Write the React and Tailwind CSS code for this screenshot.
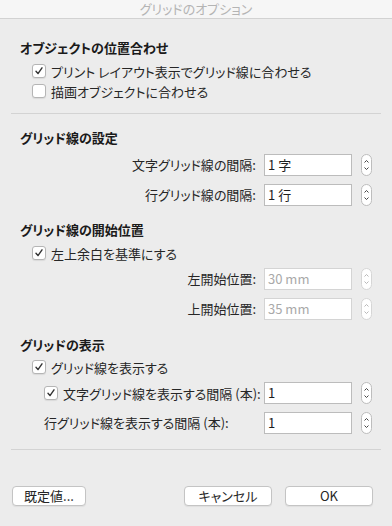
import React from 'react';

const font = { fontFamily: '"Noto Sans CJK JP", "Liberation Sans", sans-serif' };

const Check = ({ checked }) => (
    <span className="flex items-center justify-center w-[14px] h-[14px] shrink-0 rounded-[3px] bg-white border border-[#b5b5b5] shadow-[0_1px_1px_rgba(0,0,0,0.08)]">
        {checked && (
            <svg width="10" height="10" viewBox="0 0 10 10">
                <path d="M2 5.2 L4 7.6 L8 1.8" fill="none" stroke="#333" strokeWidth="1.4" strokeLinecap="round" strokeLinejoin="round" />
            </svg>
        )}
    </span>
);

const CheckRow = ({ checked, label, className = '' }) => (
    <div className={`flex items-center h-[20px] gap-[5px] ${className}`}>
        <Check checked={checked} />
        <span className="text-[13px] text-[#262626] leading-none whitespace-nowrap">{label}</span>
    </div>
);

const Stepper = ({ disabled }) => (
    <div className={`flex flex-col items-center justify-center w-[11px] h-[22px] rounded-full bg-white border ${disabled ? 'border-[#d6d6d6]' : 'border-[#bdbdbd]'}`}>
        <svg width="7" height="16" viewBox="0 0 7 16">
            <path d="M1.5 5.5 L3.5 3.5 L5.5 5.5" fill="none" stroke={disabled ? '#b8b8b8' : '#444'} strokeWidth="1" />
            <path d="M1.5 10.5 L3.5 12.5 L5.5 10.5" fill="none" stroke={disabled ? '#b8b8b8' : '#444'} strokeWidth="1" />
        </svg>
    </div>
);

const Field = ({ value, disabled }) => (
    <div className="flex items-center gap-[9px]">
        <div className={`flex items-center w-[88px] h-[22px] bg-white border pl-[3px] text-[13px] ${disabled ? 'border-[#d4d4d4] text-[#a9a9a9]' : 'border-[#bcbcbc] text-[#1e1e1e]'}`}>
            {value}
        </div>
        <Stepper disabled={disabled} />
    </div>
);

const FieldRow = ({ label, value, disabled, className = '' }) => (
    <div className={`flex items-center justify-end gap-[8px] pr-[20px] ${className}`}>
        <span className="text-[13px] text-[#262626] whitespace-nowrap">{label}</span>
        <Field value={value} disabled={disabled} />
    </div>
);

const Heading = ({ children, className = '' }) => (
    <div className={`pl-[20px] h-[18px] flex items-center text-[13px] font-bold text-[#1a1a1a] ${className}`}>{children}</div>
);

const Button = ({ children, className = '' }) => (
    <button className={`h-[20px] bg-white border border-[#c4c4c4] rounded-[4px] text-[13px] text-[#262626] flex items-center justify-center shadow-[0_1px_1px_rgba(0,0,0,0.06)] ${className}`}>
        {children}
    </button>
);

export default function App() {
    return (
        <div className="w-[392px] h-[526px] bg-[#ececec] flex flex-col overflow-hidden [font-feature-settings:'palt']" style={font}>
            {/* title bar */}
            <div className="h-[19px] shrink-0 bg-[#f6f6f6] border-b border-[#d2d2d2] flex items-center justify-center text-[13px] text-[#b4b4b4]">
                グリッドのオプション
            </div>

            <Heading className="mt-[20px]">オブジェクトの位置合わせ</Heading>
            <div className="pl-[32px] mt-[4px] flex flex-col">
                <CheckRow checked label="プリント レイアウト表示でグリッド線に合わせる" />
                <CheckRow label="描画オブジェクトに合わせる" />
            </div>

            <div className="mx-[11px] mt-[12px] h-px bg-[#d3d3d3]" />

            <Heading className="mt-[15px]">グリッド線の設定</Heading>
            <FieldRow className="mt-[7px]" label="文字グリッド線の間隔:" value="1 字" />
            <FieldRow className="mt-[8px]" label="行グリッド線の間隔:" value="1 行" />

            <Heading className="mt-[15px]">グリッド線の開始位置</Heading>
            <div className="pl-[32px] mt-[4px]">
                <CheckRow checked label="左上余白を基準にする" />
            </div>
            <FieldRow className="mt-[5px]" label="左開始位置:" value="30 mm" disabled />
            <FieldRow className="mt-[8px]" label="上開始位置:" value="35 mm" disabled />

            <Heading className="mt-[16px]">グリッドの表示</Heading>
            <div className="pl-[32px] mt-[3px]">
                <CheckRow checked label="グリッド線を表示する" />
            </div>
            <div className="flex items-center mt-[5px] pr-[20px]">
                <div className="flex-1 pl-[44px]">
                    <CheckRow checked label="文字グリッド線を表示する間隔 (本):" />
                </div>
                <Field value="1" />
            </div>
            <div className="flex items-center mt-[8px] pr-[20px]">
                <span className="flex-1 pl-[44px] text-[13px] text-[#262626] whitespace-nowrap">行グリッド線を表示する間隔 (本):</span>
                <Field value="1" />
            </div>

            <div className="mx-[11px] mt-[15px] h-px bg-[#d3d3d3]" />

            <div className="flex items-center mt-[36px] px-[12px]">
                <Button className="w-[74px]">既定値...</Button>
                <div className="flex-1" />
                <Button className="w-[88px]">キャンセル</Button>
                <Button className="w-[88px] ml-[13px] mr-[7px]">OK</Button>
            </div>
        </div>
    );
}
